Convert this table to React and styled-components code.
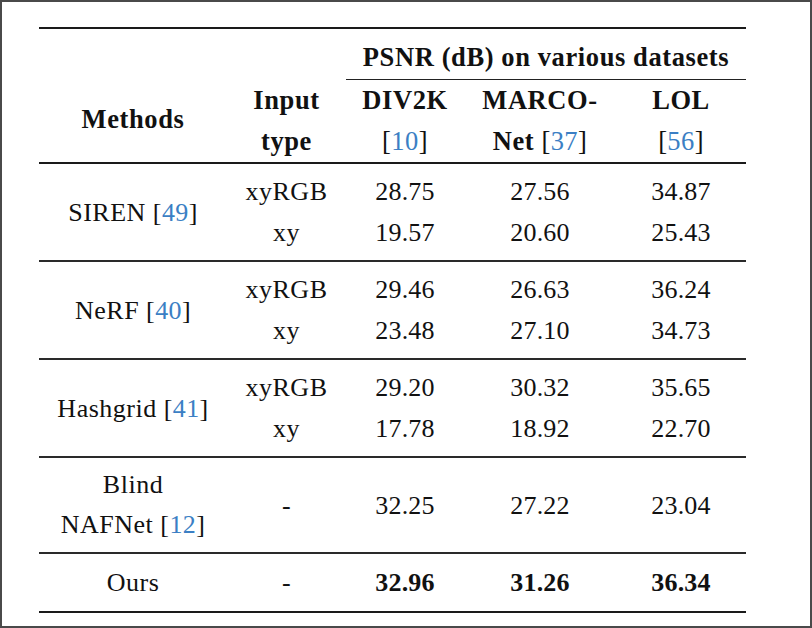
import React from 'react';
import styled, { createGlobalStyle } from 'styled-components';

const serif = `"Liberation Serif", "Times New Roman", serif`;

const GlobalStyle = createGlobalStyle`
  html, body {
    margin: 0;
    padding: 0;
    background: #ffffff;
    font-family: ${serif};
  }
`;

const Frame = styled.div`
  box-sizing: border-box;
  width: 812px;
  height: 628px;
  border: 2px solid #4a4a4a;
  background: #ffffff;
  padding: 25px 0 0 37px;
  font-family: ${serif};
`;

const Table = styled.table`
  width: 707px;
  border-collapse: collapse;
  table-layout: fixed;
  border-top: 2px solid #1a1a1a;
  border-bottom: 2px solid #1a1a1a;
  font-family: ${serif};
  font-size: 26px;
  color: #111;
`;

const Head = styled.thead`
  border-bottom: 2px solid #1a1a1a;
`;

const HeadCell = styled.th`
  font-family: ${serif};
  font-size: 26.5px;
  font-weight: bold;
  letter-spacing: 0.6px;
  text-align: center;
  line-height: 41px;
  padding: ${(p) => p.$pad || '0'};
  vertical-align: middle;
  border-bottom: ${(p) => (p.$rule ? '1px solid #222' : 'none')};
`;

const Group = styled.tbody`
  border-top: 2px solid #2a2a2a;
  &:first-of-type {
    border-top: none;
  }
`;

const Cell = styled.td`
  font-family: ${serif};
  font-size: 26px;
  letter-spacing: ${(p) => (p.$num ? '0.2px' : '0.5px')};
  text-align: center;
  vertical-align: middle;
  line-height: ${(p) => (p.$tight ? '40px' : '41px')};
  padding: ${(p) => (p.$last ? '8px 0 8px' : '7px 0 7px')};
  font-weight: ${(p) => (p.$bold ? 'bold' : 'normal')};
`;

const Line = styled.div`
  white-space: nowrap;
`;

const Cite = styled.span`
  color: #3b7fc4;
  font-weight: normal;
`;

const Plain = styled.span`
  font-weight: normal;
  letter-spacing: 0.4px;
`;

const Col = styled.col`
  width: ${(p) => p.$w}px;
`;

const Ref = ({ n }) => (
  <Plain>
    [<Cite>{n}</Cite>]
  </Plain>
);

const rows = [
  { name: 'SIREN', ref: 49, vals: [['28.75', '27.56', '34.87'], ['19.57', '20.60', '25.43']] },
  { name: 'NeRF', ref: 40, vals: [['29.46', '26.63', '36.24'], ['23.48', '27.10', '34.73']] },
  { name: 'Hashgrid', ref: 41, vals: [['29.20', '30.32', '35.65'], ['17.78', '18.92', '22.70']] },
];

export default function App() {
  return (
    <>
      <GlobalStyle />
      <Frame>
        <Table>
          <colgroup>
            <Col $w={188} />
            <Col $w={119} />
            <Col $w={118} />
            <Col $w={152} />
            <Col $w={130} />
          </colgroup>
          <Head>
            <tr>
              <HeadCell rowSpan={2} $pad="47px 0 0">Methods</HeadCell>
              <HeadCell rowSpan={2} $pad="51px 0 0">
                <Line>Input</Line>
                <Line>type</Line>
              </HeadCell>
              <HeadCell colSpan={3} $rule $pad="8px 0 1px">PSNR (dB) on various datasets</HeadCell>
            </tr>
            <tr>
              <HeadCell>
                <Line>DIV2K</Line>
                <Line><Ref n={10} /></Line>
              </HeadCell>
              <HeadCell>
                <Line>MARCO-</Line>
                <Line>Net <Ref n={37} /></Line>
              </HeadCell>
              <HeadCell>
                <Line>LOL</Line>
                <Line><Ref n={56} /></Line>
              </HeadCell>
            </tr>
          </Head>
          {rows.map((r) => (
            <Group key={r.name}>
              <tr>
                <Cell>
                  {r.name} <Ref n={r.ref} />
                </Cell>
                <Cell>
                  <Line>xyRGB</Line>
                  <Line>xy</Line>
                </Cell>
                {[0, 1, 2].map((i) => (
                  <Cell key={i} $num>
                    <Line>{r.vals[0][i]}</Line>
                    <Line>{r.vals[1][i]}</Line>
                  </Cell>
                ))}
              </tr>
            </Group>
          ))}
          <Group>
            <tr>
              <Cell $tight>
                <Line>Blind</Line>
                <Line>NAFNet <Ref n={12} /></Line>
              </Cell>
              <Cell>-</Cell>
              <Cell $num>32.25</Cell>
              <Cell $num>27.22</Cell>
              <Cell $num>23.04</Cell>
            </tr>
          </Group>
          <Group>
            <tr>
              <Cell $last>Ours</Cell>
              <Cell $last>-</Cell>
              <Cell $last $num $bold>32.96</Cell>
              <Cell $last $num $bold>31.26</Cell>
              <Cell $last $num $bold>36.34</Cell>
            </tr>
          </Group>
        </Table>
      </Frame>
    </>
  );
}
